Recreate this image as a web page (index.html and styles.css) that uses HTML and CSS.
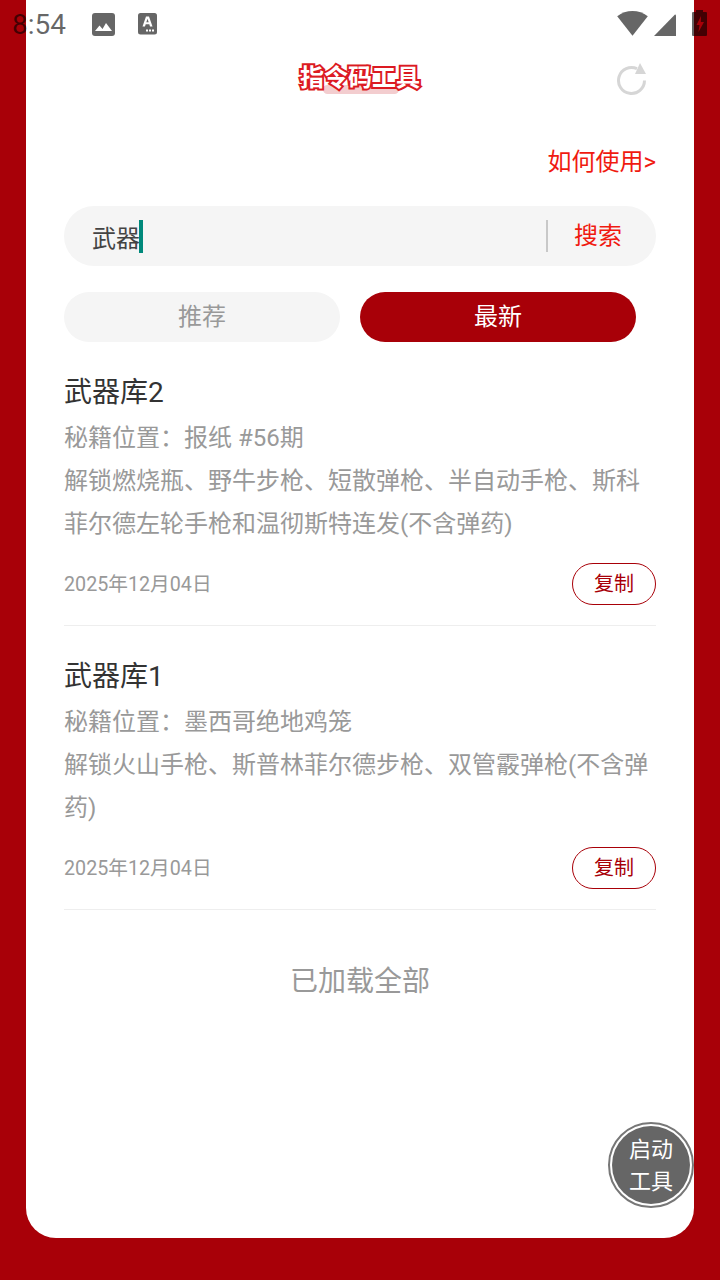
FILE: index.html
```html
<!doctype html>
<html lang="zh-CN">
    <head>
        <meta charset="UTF-8" />
        <meta name="viewport" content="width=device-width, initial-scale=1.0" />
        <title>指令码工具</title>
        <link rel="stylesheet" href="styles.css">
    </head>
    <body>
        <div class="status-bar">
            <div class="status-left">
                <span class="clock">8:54</span>
                <svg class="status-photo" width="23" height="23" viewBox="0 0 23 23"><path fill="#666" d="M3 0h17a3 3 0 0 1 3 3v17a3 3 0 0 1-3 3H3a3 3 0 0 1-3-3V3a3 3 0 0 1 3-3z"/><path fill="#fff" d="M3 18l4.500-5.500 3 3.500 3.500-6 6 8z"/></svg>
                <svg class="status-font" width="19" height="22" viewBox="0 0 19 22"><rect width="19" height="21.500" rx="2.500" fill="#666"/><path fill="#fff" d="M8 3.500h3l3.500 10h-2.500l-.7-2.200H7.700L7 13.500H4.500zM8.300 9.300h2.400L9.500 5.700z"/><rect x="11" y="16.500" width="2" height="2" fill="#fff"/><rect x="14" y="16.500" width="2" height="2" fill="#fff"/><rect x="8" y="16.500" width="2" height="2" fill="#fff"/></svg>
            </div>
            <div class="status-right">
                <svg width="31" height="25" viewBox="0 0 31 25"><path fill="#666" d="M15.500 0C21 0 26.500 1.800 30.800 5.200L15.500 24.800.2 5.200C4.500 1.800 10 0 15.500 0z"/></svg>
                <svg width="22" height="22" viewBox="0 0 22 22"><path fill="#666" d="M21 0.500a1 1 0 0 1 1 1V22H0z"/></svg>
                <svg class="status-battery" width="15" height="26" viewBox="0 0 15 26"><path fill="rgba(0,0,0,0.6)" fill-rule="evenodd" d="M4 0h7v2h3a1 1 0 0 1 1 1v22a1 1 0 0 1-1 1H1a1 1 0 0 1-1-1V3a1 1 0 0 1 1-1h3zM9 6L4.500 15h3l-1 7L12 12H8.800z"/></svg>
            </div>
        </div>

        <div class="sheet">
            <header class="topbar">
                <h1 class="brand">指令码工具</h1>
                <svg class="reload" width="32" height="36" viewBox="0 0 32 36"><path fill="none" stroke="#d6d6d6" stroke-width="3" d="M21 6.700a13 13 0 1 0 7.500 11.800"/><path fill="#d6d6d6" d="M24 1l6 11H19z"/></svg>
            </header>

            <div class="help-row"><a class="help">如何使用&gt;</a></div>

            <div class="search">
                <div class="search-text">武器<span class="caret"></span></div>
                <div class="search-btn">搜索</div>
            </div>

            <div class="tabs">
                <div class="tab">推荐</div>
                <div class="tab tab-on">最新</div>
            </div>

            <div class="item item-first">
                <div class="item-title">武器库2</div>
                <div class="item-desc">秘籍位置：报纸 #56期</div>
                <div class="item-desc">解锁燃烧瓶、野牛步枪、短散弹枪、半自动手枪、斯科菲尔德左轮手枪和温彻斯特连发(不含弹药)</div>
                <div class="item-foot">
                    <span class="item-date">2025年12月04日</span>
                    <span class="copy">复制</span>
                </div>
            </div>

            <div class="item">
                <div class="item-title">武器库1</div>
                <div class="item-desc">秘籍位置：墨西哥绝地鸡笼</div>
                <div class="item-desc">解锁火山手枪、斯普林菲尔德步枪、双管霰弹枪(不含弹药)</div>
                <div class="item-foot">
                    <span class="item-date">2025年12月04日</span>
                    <span class="copy">复制</span>
                </div>
            </div>

            <div class="end">已加载全部</div>

            <div class="launch"><div class="launch-in">启动<br>工具</div></div>
        </div>
    </body>
</html>
```

FILE: styles.css
```css
* {
    box-sizing: border-box;
}
body {
    margin: 0;
    width: 720px;
    height: 1280px;
    overflow: hidden;
    background: #a80008;
    font-family: Roboto, "Noto Sans CJK SC", sans-serif;
}
.status-bar {
    position: absolute;
    top: 0;
    left: 0;
    width: 720px;
    height: 48px;
    padding: 0 13px 0 12px;
    display: flex;
    align-items: center;
    justify-content: space-between;
    z-index: 2;
}
.status-left {
    display: flex;
    align-items: center;
}
.clock {
    font-size: 28px;
    color: rgba(0, 0, 0, 0.6);
    width: 80px;
}
.status-photo {
    margin-right: 23px;
}
.status-right {
    display: flex;
    align-items: flex-end;
    gap: 6px;
    margin-bottom: 2px;
}
.status-battery {
    margin-left: 10px;
}
.sheet {
    position: relative;
    margin: 0 26px;
    width: 668px;
    height: 1238px;
    padding: 0 38px;
    background: #fff;
    border-radius: 0 0 30px 30px;
}
.topbar {
    position: relative;
    height: 130px;
    padding-top: 63px;
    display: flex;
    justify-content: center;
}
.brand {
    position: relative;
    isolation: isolate;
    margin: 0;
    font-size: 24px;
    line-height: 30px;
    height: 30px;
    font-weight: 700;
    color: #fff;
    -webkit-text-stroke: 4px #dc1a22;
    paint-order: stroke fill;
}
.brand::after {
    content: "";
    position: absolute;
    left: 23px;
    top: 22px;
    width: 76px;
    height: 9px;
    border-radius: 6px;
    background: #f3cdcf;
    z-index: -1;
}
.reload {
    position: absolute;
    right: 8px;
    top: 62px;
}
.help-row {
    height: 76px;
    display: flex;
    justify-content: flex-end;
    padding-top: 15px;
}
.help {
    font-size: 24px;
    line-height: 34px;
    color: #f01a10;
}
.search {
    height: 60px;
    border-radius: 30px;
    background: #f5f5f5;
    padding-left: 28px;
    display: flex;
    align-items: center;
    justify-content: space-between;
}
.search-text {
    display: flex;
    align-items: center;
    font-size: 24px;
    color: #444;
}
.caret {
    width: 4px;
    height: 33px;
    margin-left: -1px;
    background: #00897b;
}
.search-btn {
    width: 110px;
    height: 32px;
    border-left: 2px solid #c8c8c8;
    font-size: 24px;
    line-height: 32px;
    color: #f01a10;
    text-align: center;
    padding-right: 8px;
}
.tabs {
    display: flex;
    gap: 20px;
    width: 572px;
    margin: 26px 0 28px;
}
.tab {
    flex: 1;
    height: 50px;
    line-height: 50px;
    border-radius: 25px;
    background: #f5f5f5;
    color: #999;
    font-size: 24px;
    text-align: center;
}
.tab-on {
    background: #a80008;
    color: #fff;
}
.item {
    height: 284px;
    padding-top: 28px;
    border-bottom: 1px solid #eee;
}
.item-first {
    height: 256px;
    padding-top: 0;
}
.item-title {
    font-size: 28px;
    line-height: 45px;
    margin-bottom: 2px;
    color: #333;
}
.item-desc {
    font-size: 24px;
    line-height: 43px;
    color: #999;
}
.item-foot {
    display: flex;
    align-items: center;
    justify-content: space-between;
    margin-top: 17px;
}
.item-date {
    font-size: 19.700px;
    line-height: 28px;
    padding-top: 2px;
    color: #999;
}
.copy {
    width: 84px;
    height: 42px;
    line-height: 41px;
    border: 1px solid #a80008;
    border-radius: 21px;
    color: #a80008;
    font-size: 20px;
    text-align: center;
}
.end {
    margin-top: 52px;
    font-size: 28px;
    line-height: 40px;
    text-align: center;
    color: #999;
}
.launch {
    position: absolute;
    right: 0;
    bottom: 30px;
    width: 86px;
    height: 86px;
    padding: 2px;
    border-radius: 50%;
    background: #fff;
    border: 2px solid #777;
}
.launch-in {
    width: 100%;
    height: 100%;
    border-radius: 50%;
    background: #666;
    color: #fff;
    font-size: 22px;
    line-height: 32px;
    text-align: center;
    padding-top: 8px;
}
```
